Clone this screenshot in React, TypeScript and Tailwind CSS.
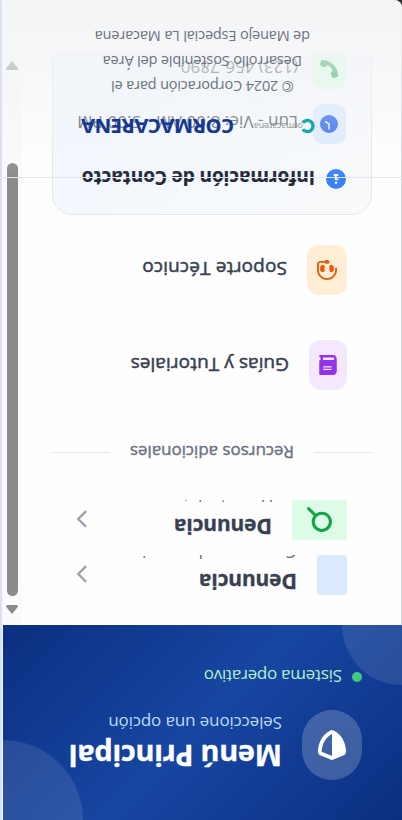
import type { ReactNode } from "react";
import {
  FaBook,
  FaChevronRight,
  FaCircleInfo,
  FaClock,
  FaHeadset,
  FaMagnifyingGlass,
  FaPhone,
  FaShieldHalved,
} from "react-icons/fa6";

function Header() {
  return (
    <header className="relative h-[195px] shrink-0 overflow-hidden bg-[linear-gradient(135deg,#0b2f80_0%,#1746a2_50%,#0b2f80_100%)] pl-10 pt-10">
      <div className="absolute -right-20 -top-20 size-40 rounded-full bg-white/10" />
      <div className="absolute -bottom-[60px] -left-[60px] size-[120px] rounded-full bg-white/10" />
      <div className="flex h-[70px] gap-5">
        <div className="flex w-[60px] items-center justify-center rounded-[30px] bg-white/20">
          <FaShieldHalved className="size-[30px] text-white" />
        </div>
        <div className="pt-[6px] whitespace-nowrap">
          <h1 className="text-[29px] font-bold leading-9 tracking-[-0.35px] text-white [-webkit-text-stroke:0.3px]">
            Menú Principal
          </h1>
          <p className="pt-px text-[17px] leading-7 tracking-[-0.13px] text-[#bfdbfe]">Seleccione una opción</p>
        </div>
      </div>
      <div className="mt-[20px] flex items-center gap-[10px] whitespace-nowrap">
        <span className="size-[10px] rounded-full bg-[#45c980]" />
        <span className="-mb-[2px] text-[17px] leading-7 tracking-[-0.27px] text-[#b1f2ca]">Sistema operativo</span>
      </div>
    </header>
  );
}

function ReportRow({ icon, subtitle }: { icon: ReactNode; subtitle: ReactNode }) {
  return (
    <div className="flex h-10 gap-5 pl-[25px]">
      {icon}
      <div className="h-10 flex-1 overflow-hidden pt-px whitespace-nowrap">
        <p className="text-[21px] font-bold leading-[25px] tracking-[-0.15px] text-[#374151] [-webkit-text-stroke:0.3px]">
          Denuncia
        </p>
        {subtitle}
      </div>
      <FaChevronRight className="mr-[25px] mt-[11px] h-5 w-[12px] text-[#9ca3af]" />
    </div>
  );
}

function InfoCard() {
  return (
    <section className="mt-[30px] h-[220px] rounded-[20px] border border-[#e5e7eb] bg-[linear-gradient(135deg,#f9fafb,#eff6ff)] pl-[25px] pt-[25px] whitespace-nowrap">
      <div className="flex h-5 items-center gap-[11px]">
        <FaCircleInfo className="size-5 shrink-0 text-[#3b82f6]" />
        <h2 className="pt-[2px] text-[19px] font-bold tracking-[-0.1px] text-[#1f2937] [-webkit-text-stroke:0.2px]">
          Información de Contacto
        </h2>
      </div>
      <div className="mt-[25px] flex h-10 items-center gap-[15px]">
        <div className="flex h-10 w-[33px] shrink-0 items-center justify-center rounded-[10px] bg-[#dbeafe]">
          <FaClock className="size-[18px] text-[#2563eb]" />
        </div>
        <span className="pt-[4px] text-[17px] tracking-[0.07px] text-[#4b5563]">Lun - Vie: 8:00 AM - 5:00 PM</span>
      </div>
      <div className="mt-[15px] flex h-10 items-center gap-[15px]">
        <div className="flex h-10 w-[33px] shrink-0 items-center justify-center rounded-[10px] bg-[#dcfce7]">
          <FaPhone className="size-[18px] text-[#16a34a]" />
        </div>
        <span className="pt-[3px] text-[17px] text-[#4b5563]">(123) 456-7890</span>
      </div>
    </section>
  );
}

function Footer() {
  return (
    <footer className="absolute inset-x-0 bottom-0 h-[178px] border-t border-[#e5e7eb] bg-[linear-gradient(to_top,#f3f4f6_0%,#f3f4f6b3_30%,#ffffff00_100%)] pt-[37px] whitespace-nowrap">
      <div className="flex h-7 items-center pl-[86px]">
        <svg className="size-4" viewBox="0 0 16 16" fill="none" stroke="#17a9ad" strokeWidth="3.4">
          <path d="M13.2 4.8A5.6 5.6 0 1 0 13.2 11.2" />
        </svg>
        <span className="-ml-[3px] w-[50px] text-[9px] leading-4 tracking-[-0.2px] text-[#8f8f8f]">ormacarena</span>
        <span className="ml-[19px] text-xl font-bold tracking-[-0.27px] text-[#14378f] [-webkit-text-stroke:0.2px]">
          CORMACARENA
        </span>
      </div>
      <p className="mt-[13px] text-center text-[14.5px] leading-[25px] tracking-[-0.15px] text-[#6b7280]">
        © 2024 Corporación para el
        <br />
        Desarrollo Sostenible del Área
        <br />
        de Manejo Especial La Macarena
      </p>
    </footer>
  );
}

function Scrollbar() {
  return (
    <div className="flex w-[19px] shrink-0 flex-col items-center bg-[#fafafa] pt-[11px]">
      <svg className="h-[9px] w-3" viewBox="0 0 12 9" fill="#8b8b8b">
        <path d="M6 0 11.7 7Q12.2 9 10.5 9H1.5Q-.2 9 .3 7Z" />
      </svg>
      <div className="mt-[9px] h-[433px] w-[11px] rounded-full bg-[#8b8b8b]" />
      <svg className="mt-[93px] h-[9px] w-3" viewBox="0 0 12 9" fill="#8b8b8b">
        <path d="M6 9 11.7 2Q12.2 0 10.5 0H1.5Q-.2 0 .3 2Z" />
      </svg>
    </div>
  );
}

export default function App() {
  return (
    <div className="flex h-[820px] w-[402px] rotate-180 overflow-hidden bg-[#333] font-['Open_Sans','Noto_Sans',sans-serif]">
      <div className="relative flex w-[399px] flex-col overflow-hidden rounded-bl-lg bg-[#fefefe]">
        <Header />
        <main className="flex h-[573px] overflow-hidden border-l border-gray-300">
          <div className="flex-1 pl-[29px] pr-[30px] pt-[30px]">
            <ReportRow
              subtitle={<p className="mt-[3px] text-lg leading-7 text-[#6b7280]">Crear una denuncia</p>}
              icon={<div className="h-10 w-[30px] shrink-0 rounded-sm bg-[#dbeafe]" />}
            />
            <div className="h-[15px]" />
            <ReportRow
              subtitle={<p className="mt-[4px] text-[17px] leading-7 text-[#6b7280]">Ver mis datos</p>}
              icon={
                <div className="flex h-10 w-[55px] shrink-0 items-center justify-center bg-[#dcfce7]">
                  <FaMagnifyingGlass className="size-[25px] text-[#16a34a]" />
                </div>
              }
            />
            <div className="mt-[33px] flex h-7 items-center whitespace-nowrap">
              <div className="h-px flex-1 bg-[#e5e7eb]" />
              <span className="w-[204px] pt-[2px] text-center text-[17px] font-medium tracking-[-0.05px] text-[#6b7280] [-webkit-text-stroke:0.4px]">
                Recursos adicionales
              </span>
              <div className="h-px flex-1 bg-[#e5e7eb]" />
            </div>
            <div className="mt-[49px] flex h-[50px] items-center gap-5 pl-[25px] whitespace-nowrap">
              <div className="flex h-[50px] w-[38px] shrink-0 items-center justify-center rounded-xl bg-[#f3e8ff]">
                <FaBook className="h-5 w-[18px] text-[#9333ea]" />
              </div>
              <span className="pt-px text-[19px] font-medium tracking-[0.07px] text-[#374151] [-webkit-text-stroke:0.5px]">
                Guías y Tutoriales
              </span>
            </div>
            <div className="mt-[45px] flex h-[50px] items-center gap-5 pl-[25px] whitespace-nowrap">
              <div className="flex h-[50px] w-10 shrink-0 items-center justify-center rounded-xl bg-[#ffedd5]">
                <FaHeadset className="size-5 text-[#ea580c]" />
              </div>
              <span className="pt-[2px] text-[19px] font-medium tracking-[0.17px] text-[#374151] [-webkit-text-stroke:0.5px]">
                Soporte Técnico
              </span>
            </div>
            <InfoCard />
          </div>
          <Scrollbar />
        </main>
        <div className="flex-1 border-l border-gray-300" />
        <Footer />
      </div>
      <div className="w-px bg-[#f6f8fb]" />
      <div className="w-[2px] bg-[#d9e0ee]" />
    </div>
  );
}
